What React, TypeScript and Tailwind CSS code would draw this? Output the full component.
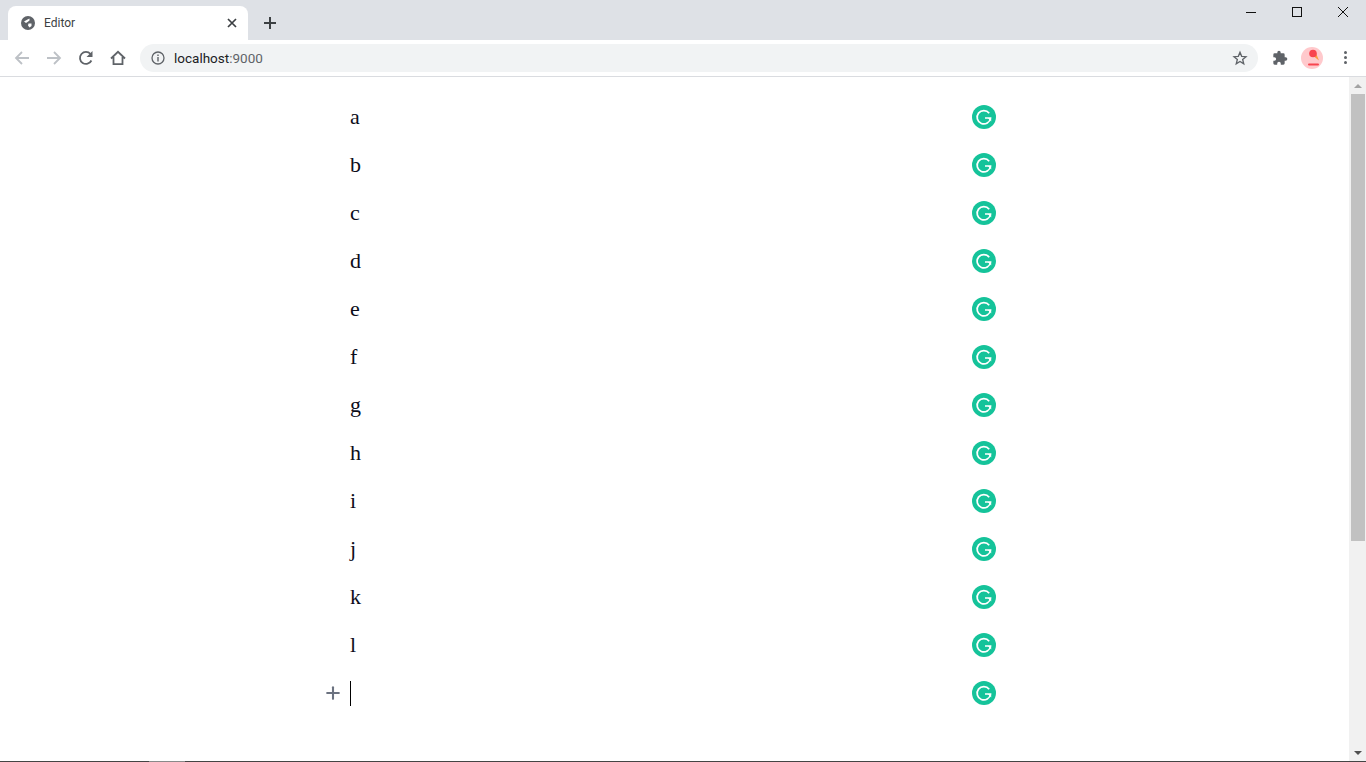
import { Plus } from 'lucide-react'

const letters = ['a', 'b', 'c', 'd', 'e', 'f', 'g', 'h', 'i', 'j', 'k', 'l', '']

function GlobeIcon() {
  return (
    <svg width="16" height="16" viewBox="0 0 16 16" className="shrink-0">
      <circle cx="8" cy="8" r="7" fill="#5f6368" />
      <path d="M4 6.5 L7.5 4.5 L9.5 3.5 L9.5 5.5 L7.5 7 L6 8 Z" fill="#fff" />
      <path d="M8.5 8.5 L11.5 8.5 L11.5 11 L9.5 12.5 L8 10.5 Z" fill="#fff" />
    </svg>
  )
}

function GrammarlyIcon() {
  return (
    <svg width="24" height="24" viewBox="0 0 24 24">
      <circle cx="12" cy="12" r="12" fill="#15c39a" />
      <path d="M17.2 8.2 A6.7 6.7 0 1 0 18.5 13 H13" fill="none" stroke="#fff" strokeWidth="1.7" />
      <path d="M19.2 13 V16.6 L15.8 13 Z" fill="#fff" />
    </svg>
  )
}

function Avatar() {
  return (
    <svg width="22" height="22" viewBox="0 0 22 22">
      <circle cx="11" cy="11" r="11" fill="#ffc9cc" />
      <path d="M11 8 L18 13.5 L14.5 5 Z" fill="#f9a03f" />
      <circle cx="12" cy="6.5" r="3.8" fill="#f8454f" />
      <rect x="7" y="16.5" width="11" height="2" rx="1" fill="#f8454f" />
    </svg>
  )
}

function ToolIcon({ d, color }: { d: string; color: string }) {
  return (
    <svg width="16" height="16" viewBox="0 0 16 16" fill="none" stroke={color} strokeWidth="1.8">
      <path d={d} />
    </svg>
  )
}

export default function App() {
  return (
    <div className="h-[762px] overflow-hidden flex flex-col bg-white font-['Roboto','Liberation_Sans',sans-serif]">
      {/* tab strip */}
      <div className="h-10 shrink-0 bg-[#dee1e6] flex">
        <div className="mt-1.5 ml-2 w-60 h-[34px] bg-white rounded-t-lg flex items-center pl-3 pr-[11px]">
          <GlobeIcon />
          <span className="ml-2 flex-1 text-xs text-[#3c4043]">Editor</span>
          <svg width="10" height="10" viewBox="0 0 10 10" stroke="#3c4043" strokeWidth="1.7">
            <path d="M1 1 L9 9 M9 1 L1 9" />
          </svg>
        </div>
        <div className="mt-1.5 ml-[15px] h-[34px] flex items-center">
          <svg width="14" height="14" viewBox="0 0 14 14" stroke="#3c4043" strokeWidth="2">
            <path d="M7 1 V13 M1 7 H13" />
          </svg>
        </div>
        <div className="ml-auto flex h-6">
          <div className="w-[46px] flex items-center justify-center">
            <svg width="10" height="10" viewBox="0 0 10 10" stroke="#111" strokeWidth="1"><path d="M0 5.5 H10" /></svg>
          </div>
          <div className="w-[46px] flex items-center justify-center">
            <svg width="10" height="10" viewBox="0 0 10 10" stroke="#111" strokeWidth="1" fill="none"><rect x="0.5" y="0.5" width="9" height="9" /></svg>
          </div>
          <div className="w-[46px] flex items-center justify-center">
            <svg width="10" height="10" viewBox="0 0 10 10" stroke="#111" strokeWidth="1"><path d="M0 0 L10 10 M10 0 L0 10" /></svg>
          </div>
        </div>
      </div>

      {/* toolbar */}
      <div className="h-[37px] shrink-0 border-b border-[#dadce0] flex items-center pb-px">
        <div className="w-[140px] flex items-center pl-3.5 gap-4">
          <ToolIcon color="#bdc1c6" d="M15 8 H2 M8 2 L2 8 L8 14" />
          <ToolIcon color="#bdc1c6" d="M1 8 H14 M8 2 L14 8 L8 14" />
          <svg width="16" height="16" viewBox="0 0 16 16" fill="none">
            <path d="M13.4 10.5 A6 6 0 1 1 12.5 4" stroke="#5f6368" strokeWidth="1.8" />
            <path d="M14.5 1 V7 H8.5 Z" fill="#5f6368" />
          </svg>
          <ToolIcon color="#5f6368" d="M1 8.5 L8 1.8 L15 8.5 M3.5 7 V14.2 H12.5 V7" />
        </div>
        <div className="w-[1118px] h-7 rounded-full bg-[#f1f3f4] flex items-center pl-[11px] pr-[10px]">
          <svg width="14" height="14" viewBox="0 0 14 14" fill="none">
            <circle cx="7" cy="7" r="6" stroke="#5f6368" strokeWidth="1.3" />
            <path d="M7 6 V10.5 M7 3.5 V5" stroke="#5f6368" strokeWidth="1.4" />
          </svg>
          <span className="ml-[9px] pt-px flex-1 text-[13.5px] text-[#202124]">
            localhost<span className="text-[#5f6368]">:9000</span>
          </span>
          <svg width="16" height="16" viewBox="0 0 24 24" fill="none" stroke="#5f6368" strokeWidth="2">
            <path d="M12 3.5 L14.5 9.5 L21 10 L16 14.3 L17.6 20.7 L12 17.3 L6.4 20.7 L8 14.3 L3 10 L9.5 9.5 Z" />
          </svg>
        </div>
        <div className="flex-1 flex items-center pl-[14px]">
          <svg width="16" height="16" viewBox="0 0 24 24" fill="#5f6368">
            <path d="M20.5 11H19V7a2 2 0 0 0-2-2h-4V3.5a2.5 2.5 0 0 0-5 0V5H4a2 2 0 0 0-2 2v3.8h1.5a2.7 2.7 0 0 1 0 5.4H2V20a2 2 0 0 0 2 2h3.8v-1.5a2.7 2.7 0 0 1 5.4 0V22H17a2 2 0 0 0 2-2v-4h1.5a2.5 2.5 0 0 0 0-5z" />
          </svg>
          <div className="ml-[13px]"><Avatar /></div>
          <div className="ml-[21px] flex flex-col gap-[2px]">
            <span className="w-[3px] h-[3px] rounded-full bg-[#5f6368]" />
            <span className="w-[3px] h-[3px] rounded-full bg-[#5f6368]" />
            <span className="w-[3px] h-[3px] rounded-full bg-[#5f6368]" />
          </div>
        </div>
      </div>

      {/* page */}
      <div className="flex-1 min-h-0 flex">
        <div className="flex-1 pl-[350px] pt-4">
          {letters.map((letter, i) => (
            <div key={i} className="relative w-[646px] h-12 flex items-center justify-between font-['Liberation_Serif',serif] text-[22px] text-[#0d0d1a]">
              {letter ? (
                <span className="pb-0.5">{letter}</span>
              ) : (
                <>
                  <Plus size={20} strokeWidth={2.5} className="absolute left-[-27px] top-[14px] text-[#6b7280]" />
                  <span className="w-px h-[25px] mt-px bg-black" />
                </>
              )}
              <GrammarlyIcon />
            </div>
          ))}
        </div>

        {/* scrollbar */}
        <div className="w-[17px] shrink-0 bg-[#f1f1f1] flex flex-col items-center">
          <div className="h-[17px] flex items-center justify-center">
            <div className="border-x-4 border-x-transparent border-b-4 border-b-[#a3a3a3]" />
          </div>
          <div className="w-[14px] ml-[2px] self-start h-[447px] bg-[#c1c1c1]" />
          <div className="mt-auto h-[17px] flex items-center justify-center">
            <div className="border-x-4 border-x-transparent border-t-4 border-t-[#505050]" />
          </div>
        </div>
      </div>

      {/* bottom edge of the window */}
      <div className="h-px shrink-0 flex bg-[#444]">
        <div className="ml-[149px] w-9 bg-[#8a8a8a]" />
      </div>
    </div>
  )
}
